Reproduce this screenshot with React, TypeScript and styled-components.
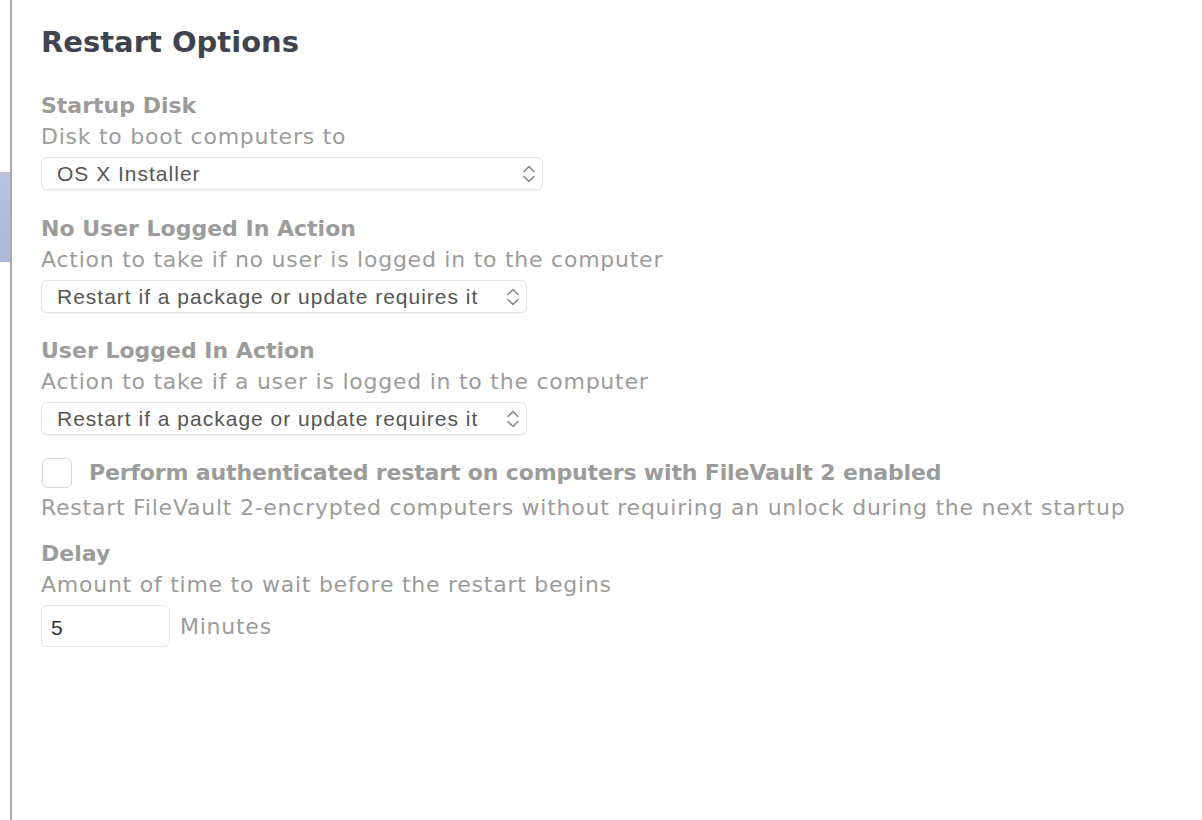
import React from "react";
import styled, { createGlobalStyle } from "styled-components";

const Global = createGlobalStyle`
  html, body { margin: 0; padding: 0; background: #ffffff; }
  body { font-family: "DejaVu Sans", Verdana, sans-serif; }
  * { box-sizing: border-box; }
`;

const Page = styled.div`
  display: flex;
  width: 1202px;
  height: 820px;
  overflow: hidden;
  background: #fff;
`;

const Sidebar = styled.div`
  width: 12px;
  flex: none;
  border-right: 2px solid #a9a9a9;
  padding-top: 172px;
`;

const SelectedItem = styled.div`
  width: 10px;
  height: 90px;
  background: linear-gradient(180deg, #b5c3dd 0%, #a9b9d7 100%);
`;

const Content = styled.main`
  flex: 1;
  padding: 22px 0 0 29px;
  display: flex;
  flex-direction: column;
`;

const Title = styled.h1`
  margin: 0;
  font-size: 29px;
  line-height: 40px;
  font-weight: 700;
  color: #3d4450;
`;

const Field = styled.section<{ $top: number }>`
  display: flex;
  flex-direction: column;
  margin-top: ${(p) => p.$top}px;
`;

const Heading = styled.div`
  font-size: 22px;
  line-height: 32px;
  font-weight: 700;
  color: #9b9b9b;
`;

const Desc = styled.div<{ $top?: number }>`
  font-size: 22px;
  line-height: 30px;
  letter-spacing: 0.75px;
  color: #9b9b9b;
  margin-top: ${(p) => p.$top ?? 0}px;
`;

const SelectBox = styled.div<{ $w: number; $h: number }>`
  margin-top: 5px;
  width: ${(p) => p.$w}px;
  height: ${(p) => p.$h}px;
  display: flex;
  align-items: center;
  justify-content: space-between;
  padding: 0 5px 0 15px;
  border: 1px solid #e2e2e2;
  border-radius: 6px;
  background: #fff;
  box-shadow: 0 1px 1px rgba(0, 0, 0, 0.06);
  font-family: "Liberation Sans", Arial, sans-serif;
  font-size: 21px;
  letter-spacing: 1px;
  color: #555;
`;

const Arrows = () => (
  <svg width="16" height="22" viewBox="0 0 16 22" fill="none" stroke="#8a8a8a" strokeWidth="1.6" strokeLinecap="round" strokeLinejoin="round">
    <path d="M3 8.5 L8 3.5 L13 8.5" />
    <path d="M3 13.5 L8 18.5 L13 13.5" />
  </svg>
);

const CheckRow = styled.label`
  display: flex;
  align-items: center;
  gap: 17px;
  height: 36px;
  margin-top: 20px;
  padding-left: 1px;
`;

const CheckBox = styled.span`
  width: 30px;
  height: 30px;
  border: 1px solid #d6d6d6;
  border-radius: 6px;
  background: #fff;
  flex: none;
`;

const CheckLabel = styled.span`
  font-size: 22px;
  line-height: 30px;
  font-weight: 700;
  letter-spacing: -0.15px;
  color: #9b9b9b;
`;

const InputRow = styled.div`
  display: flex;
  align-items: center;
  gap: 10px;
  margin-top: 5px;
`;

const NumberInput = styled.div`
  width: 129px;
  height: 42px;
  border: 1px solid #e2e2e2;
  border-radius: 6px;
  display: flex;
  align-items: center;
  padding: 3px 0 0 9px;
  font-family: "Liberation Sans", Arial, sans-serif;
  font-size: 21px;
  color: #333;
`;

const Unit = styled.span`
  font-size: 22px;
  letter-spacing: 0.75px;
  color: #9b9b9b;
`;

type SelectProps = { label: string; desc: string; value: string; w: number; h: number; top: number };

const SelectField = ({ label, desc, value, w, h, top }: SelectProps) => (
  <Field $top={top}>
    <Heading>{label}</Heading>
    <Desc>{desc}</Desc>
    <SelectBox $w={w} $h={h}>
      <span>{value}</span>
      <Arrows />
    </SelectBox>
  </Field>
);

export default function App() {
  return (
    <>
      <Global />
      <Page>
        <Sidebar>
          <SelectedItem />
        </Sidebar>
        <Content>
          <Title>Restart Options</Title>
          <SelectField top={28} label="Startup Disk" desc="Disk to boot computers to" value="OS X Installer" w={502} h={33} />
          <SelectField top={23} label="No User Logged In Action" desc="Action to take if no user is logged in to the computer" value="Restart if a package or update requires it" w={486} h={33} />
          <SelectField top={22} label="User Logged In Action" desc="Action to take if a user is logged in to the computer" value="Restart if a package or update requires it" w={486} h={33} />
          <CheckRow>
            <CheckBox />
            <CheckLabel>Perform authenticated restart on computers with FileVault 2 enabled</CheckLabel>
          </CheckRow>
          <Desc $top={2}>Restart FileVault 2-encrypted computers without requiring an unlock during the next startup</Desc>
          <Field $top={15}>
            <Heading>Delay</Heading>
            <Desc>Amount of time to wait before the restart begins</Desc>
            <InputRow>
              <NumberInput>5</NumberInput>
              <Unit>Minutes</Unit>
            </InputRow>
          </Field>
        </Content>
      </Page>
    </>
  );
}
